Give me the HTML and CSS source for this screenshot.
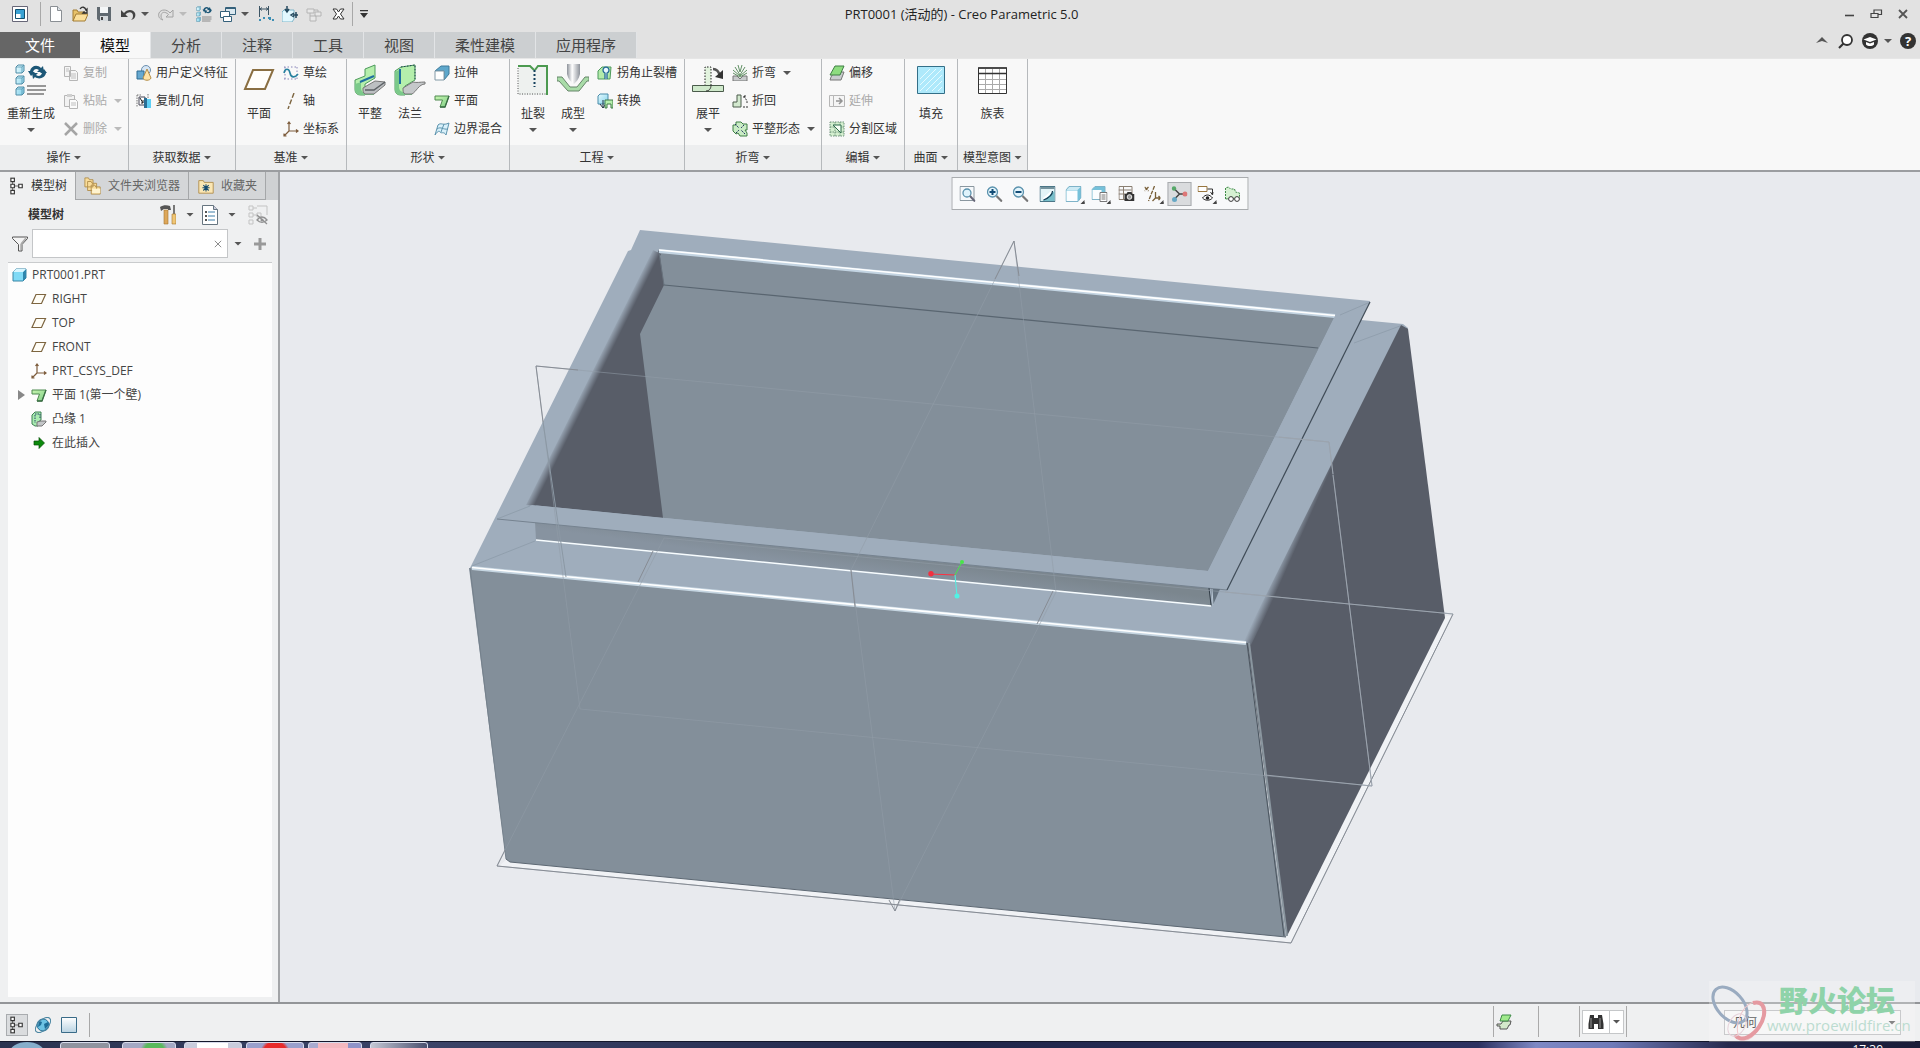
FILE: index.html
```html
<!DOCTYPE html>
<html lang="zh-CN">
<head>
<meta charset="utf-8">
<title>PRT0001 (活动的) - Creo Parametric 5.0</title>
<link rel="stylesheet" href="styles.css">
</head>
<body>
<svg class="defs" aria-hidden="true">
  <defs>
    <linearGradient id="gBlue" x1="0" y1="0" x2="1" y2="1"><stop offset="0" stop-color="#e8fbff"/><stop offset="1" stop-color="#7fd0ea"/></linearGradient>
    <linearGradient id="gGlass" x1="0" y1="0" x2="0" y2="1"><stop offset="0" stop-color="#fff"/><stop offset="1" stop-color="#b9d3e2"/></linearGradient>
    <linearGradient id="gGreen" x1="0" y1="0" x2="1" y2="1"><stop offset="0" stop-color="#c8f5b0"/><stop offset="1" stop-color="#7fcf86"/></linearGradient>
    <linearGradient id="gMetal" x1="0" y1="0" x2="1" y2="0"><stop offset="0" stop-color="#8d929a"/><stop offset=".4" stop-color="#fff"/><stop offset="1" stop-color="#8d929a"/></linearGradient>
  </defs>
  <symbol id="i-plane" viewBox="0 0 16 16"><path d="M5 3.500h9.500l-4 9H1z" fill="#fffdf6" stroke="#7d6540" stroke-width="1.200"/></symbol>
  <symbol id="i-csys" viewBox="0 0 16 16"><path d="M6 1v9h9M6 10l-5 5M4.500 3L6 1l1.500 2M13 8.500l2 1.500-2 1.500M1 12.500V15h2.500" fill="none" stroke="#7d5c3c" stroke-width="1.200"/></symbol>
  <symbol id="i-flat" viewBox="0 0 16 16"><path d="M1 3h14l-4 11H6l2.500-7H1z" fill="url(#gGreen)" stroke="#4f8a50"/><path d="M15 3l-4 11H6" fill="none" stroke="#3b6d45" stroke-width="1.300"/></symbol>
  <symbol id="i-tree" viewBox="0 0 16 20"><path d="M3 3v14M3 10h8" stroke="#555" fill="none"/><g fill="#fff" stroke="#333" stroke-width="1.300"><path d="M1 1h4v4H1zM1 8h4v4H1zM1 15h4v4H1zM10 8h4v4h-4z"/></g></symbol>
  <symbol id="i-regen" viewBox="0 0 32 32"><g fill="url(#gBlue)" stroke="#4f8ca6"><path d="M1 3l2-2h6v6L7 9H1zM1 14l2-2h6v6l-2 2H1zM1 25l2-2h6v6l-2 2H1z"/></g><path d="M1 3h6v6M7 3l2-2M1 14h6v6M7 14l2-2M1 25h6v6M7 25l2-2" fill="none" stroke="#4f8ca6" stroke-width=".7"/><path d="M15 7c1-5 7-7 11-3l2-2 1 6h-7l2-2c-3-2-5-1-6 2h2l-4 4-3-5z" fill="#1d5777"/><path d="M31 9c-1 5-7 7-11 4l-2 2-1-6h6l-2 2c3 2 5 1 6-2h-2l4-4 3 4z" fill="#1d5777"/><path d="M12 22h19M12 26h19M12 30h17" stroke="#777" stroke-width="1.600"/></symbol>
</svg>

<header class="titlebar">
  <nav class="quick" aria-label="快速访问">
    <button class="q" aria-label="应用"><svg viewBox="0 0 16 16"><path d="M.5 .5h15v15H.5z" fill="#fff" stroke="#667"/><path d="M3.500 3.500h9v9h-9z" fill="#3aa2d4" stroke="#12506e"/><path d="M4 8h4.500v4H4z" fill="#fff"/></svg></button>
    <i class="vbar"></i>
    <button class="q" aria-label="新建"><svg viewBox="0 0 16 16"><path d="M2.500 .5h7l4 4v11h-11z" fill="#fff" stroke="#8a8f94"/><path d="M9.500 .5v4h4" fill="#dde3e8" stroke="#8a8f94"/></svg></button>
    <button class="q" aria-label="打开"><svg viewBox="0 0 16 16"><path d="M1 15V4h4l1 2h7v3" fill="#e8c26a" stroke="#a27c35"/><path d="M1 15l3-7h12l-3 7z" fill="#fbdf9b" stroke="#a27c35"/><path d="M8 3c2-3 5-2 6 1l1-1v4h-4l1.500-1.500" fill="none" stroke="#333" stroke-width="1.300"/></svg></button>
    <button class="q" aria-label="保存"><svg viewBox="0 0 16 16"><path d="M1 1h14v14H3l-2-2z" fill="#606970"/><path d="M4 1h8v6H4z" fill="#f4f6f7"/><path d="M4 10h8v5H4z" fill="#d5d9dc"/><path d="M5 11h2v3H5z" fill="#444"/></svg></button>
    <button class="q" aria-label="撤消"><svg viewBox="0 0 16 16"><path d="M1 4v7h7L5.500 8.500C9 5 13 6 13 10c0 2-1 3-2 4 4-1 5-4 4-7-2-4-8-4-11 0z" fill="#444"/></svg></button>
    <i class="arr narrow"></i>
    <button class="q" aria-label="重做" disabled><svg viewBox="0 0 16 16"><path d="M15 4v7H8l2.500-2.500C7 5 3 6 3 10c0 2 1 3 2 4-4-1-5-4-4-7 2-4 8-4 11 0z" fill="#ddd" stroke="#666"/></svg></button>
    <i class="arr narrow dim"></i>
    <button class="q" aria-label="重新生成"><svg viewBox="0 0 32 32"><use href="#i-regen"/></svg></button>
    <button class="q" aria-label="窗口"><svg viewBox="0 0 16 16"><path d="M5.500 1.500h10v7h-10z" fill="#dbe8ef" stroke="#35617b"/><path d="M.5 5.500h9v6h-9z" fill="#fff" stroke="#35617b"/><path d="M3.500 10.500h8v5h-8z" fill="#fff" stroke="#35617b"/><path d="M5 2.500h10" stroke="#35617b"/></svg></button>
    <i class="arr narrow"></i>
    <button class="q" aria-label="尺寸"><svg viewBox="0 0 16 16"><path d="M1.500 0v11M10.500 0v9M2 3h8M4 1.500L2 3l2 1.500M8 1.500L10 3 8 4.500" fill="none" stroke="#3d5565"/><path d="M1 14h2M5 12h2M10 12h2v2M14 14h2" fill="none" stroke="#3e8fb4" stroke-width="2"/></svg></button>
    <button class="q" aria-label="参考"><svg viewBox="0 0 16 16"><path d="M0 6l2-2h10v9l-2 3H0z" fill="#e2f8fe" stroke="#7fb4c8"/><path d="M5 0v5M3 3l2 3 2-3M14 6v6M11 9h5M12 7l-3 2 3 2" fill="none" stroke="#24485d" stroke-width="1.500"/></svg></button>
    <button class="q" aria-label="族" disabled><svg viewBox="0 0 16 16"><path d="M1 3h7v4H1zM9 6h6v4H9zM4 10h6v5H4z" fill="#eee" stroke="#888"/><path d="M4 7v3M8 4h4v2" fill="none" stroke="#888"/></svg></button>
    <button class="q" aria-label="关闭"><svg viewBox="0 0 16 16"><path d="M3 3h3.500L8.500 6l2-3H14l-3.500 5 3.500 5h-3.500l-2-3-2 3H3l3.500-5z" fill="#fff" stroke="#333"/></svg></button>
    <i class="vbar last"></i>
    <button class="q more" aria-label="自定义"><i class="arr over"></i></button>
  </nav>
  <h1>PRT0001 (活动的) - Creo Parametric 5.0</h1>
  <div class="winctl">
    <button class="q" aria-label="最小化"><svg viewBox="0 0 16 16"><path d="M4 9.500h9" stroke="#444" stroke-width="1.600"/></svg></button>
    <button class="q" aria-label="还原"><svg viewBox="0 0 16 16"><path d="M3 7.500h7v4H3zM6 7V4h7.500v4.500H10" fill="none" stroke="#444" stroke-width="1.200"/></svg></button>
    <button class="q" aria-label="关闭"><svg viewBox="0 0 16 16"><path d="M4 4l8 8M12 4l-8 8" stroke="#555" stroke-width="1.800"/></svg></button>
  </div>
</header>

<div class="tabrow">
  <nav class="tabs">
    <button class="file">文件</button><button class="on">模型</button><button>分析</button><button>注释</button><button>工具</button><button>视图</button><button>柔性建模</button><button>应用程序</button>
  </nav>
  <div class="helpers">
    <button class="q" aria-label="折叠"><svg viewBox="0 0 16 16"><path d="M2 10l6-6 6 6-6-2z" fill="#555"/></svg></button>
    <button class="q" aria-label="搜索"><svg viewBox="0 0 16 16"><circle cx="9" cy="7" r="5" fill="#fff" stroke="#333" stroke-width="1.800"/><path d="M5.500 10.500L1 15" stroke="#333" stroke-width="2.200"/></svg></button>
    <button class="q" aria-label="学习"><svg viewBox="0 0 16 16"><circle cx="8" cy="8" r="8" fill="#333"/><path d="M1.500 6.500L8 4l6.500 2.500L8 9zM4 9v2.500c2 2 6 2 8 0V9L8 10.500z" fill="#fff"/></svg></button>
    <i class="arr"></i>
    <button class="q helpbtn" aria-label="帮助">?</button>
  </div>
</div>

<section class="ribbon" aria-label="功能区">
  <div class="group g-op">
    <div class="body">
      <button class="big"><svg viewBox="0 0 32 32"><use href="#i-regen"/></svg><span>重新生成</span><i class="arr"></i></button>
      <div class="col">
        <button class="sm" disabled><svg viewBox="0 0 16 16"><path d="M1.500 1.500h6v10h-6zM6.500 5.500h6l2 2v8h-8z" fill="#f4f4f4" stroke="#777"/><path d="M3 4h3M3 6h3M8 9h5M8 11h5M8 13h5" stroke="#888"/></svg>复制</button>
        <button class="sm" disabled><svg viewBox="0 0 16 16"><path d="M1.500 2.500h10v11h-10z" fill="#eee" stroke="#777"/><path d="M4 1h5v3H4z" fill="#aaa"/><path d="M6.500 6.500h6l2 2v7h-8z" fill="#fff" stroke="#777"/><path d="M8 10h5M8 12h5" stroke="#888"/></svg>粘贴<i class="arr"></i></button>
        <button class="sm" disabled><svg viewBox="0 0 16 16"><path d="M2 2l12 12M14 2L2 14" stroke="#555" stroke-width="2.500"/></svg>删除<i class="arr"></i></button>
      </div>
    </div>
    <button class="cap">操作<i class="arr"></i></button>
  </div>
  <div class="group g-get">
    <div class="body">
      <div class="col">
        <button class="sm"><svg viewBox="0 0 16 16"><circle cx="10" cy="5" r="4.500" fill="#d6e6f5" stroke="#6c8fae"/><path d="M1 6h7v8H1z" fill="#67a9d0" stroke="#2f6d93"/><path d="M11 4l4 9c-1 3-7 3-8 0z" fill="#ffe3a6" stroke="#b38d46"/></svg>用户定义特征</button>
        <button class="sm"><svg viewBox="0 0 16 16"><path d="M1 2h4M1 2v12M12 1v4" stroke="#777" stroke-dasharray="1.500 1"/><path d="M3 4h6v8H3z" fill="#fff" stroke="#445"/><path d="M4 5l3 5M7 7v3H5" stroke="#222" fill="none"/><path d="M10 6h5v9h-5z" fill="#5fd0f5"/><path d="M8 5h3v10H8z" fill="#2b6f95"/></svg>复制几何</button>
      </div>
    </div>
    <button class="cap">获取数据<i class="arr"></i></button>
  </div>
  <div class="group g-datum">
    <div class="body">
      <button class="big"><svg viewBox="0 0 32 32"><path d="M10 6h20l-8 19H2z" fill="#fffefb" stroke="#8a6f42" stroke-width="2"/></svg><span>平面</span></button>
      <div class="col">
        <button class="sm"><svg viewBox="0 0 16 16"><path d="M1 2h14M1 14h14M2 2v12M14 2v12" stroke="#8884b8" stroke-dasharray="1.500 2"/><path d="M1 8c1-5 5-5 6 0s5 5 8 1" fill="none" stroke="#27809f" stroke-width="1.600"/></svg>草绘</button>
        <button class="sm"><svg viewBox="0 0 16 16"><path d="M11 0L5 16" stroke="#7d6540" stroke-width="1.400" stroke-dasharray="5 2"/></svg>轴</button>
        <button class="sm"><svg viewBox="0 0 16 16"><use href="#i-csys"/></svg>坐标系</button>
      </div>
    </div>
    <button class="cap">基准<i class="arr"></i></button>
  </div>
  <div class="group g-shape">
    <div class="body">
      <button class="big"><svg viewBox="0 0 32 32"><path d="M1 16l10-4V5l10-4v13l-10 6v11H7c-4 0-6-2-6-6z" fill="#b5efac" stroke="#4d9a5c"/><path d="M1 20l6-2v6c0 3 2 5 5 5h8v2H8c-4 0-7-2-7-6z" fill="#7bc98a"/><path d="M9 24l12-7 10 1v3l-11 9h-9c-2-1-2-3-2-6z" fill="#bcbfc2" stroke="#777"/><path d="M6 18l14-6" stroke="#1e6fa0" stroke-width="2"/><path d="M11 26h9l11-8" fill="none" stroke="#5c6165" stroke-width="1.500"/></svg><span>平整</span></button>
      <button class="big"><svg viewBox="0 0 32 32"><path d="M1 7l6-4 14-2v15l-10 6v9H7c-4 0-6-2-6-6z" fill="#b5efac" stroke="#4d9a5c"/><path d="M1 8l4-2v17c0 3 2 5 5 5h8v3H8c-4 0-7-2-7-6z" fill="#7bc98a"/><path d="M9 24l10-6c4 1 7 0 12 0v2c-6 0-9 8-13 10h-7c-2-1-2-3-2-6z" fill="#c5c8ca" stroke="#777"/><path d="M6 5v15" stroke="#1e6fa0" stroke-width="2"/><path d="M7 3l14-2v14" fill="none" stroke="#245" stroke-dasharray="1.500 1.500"/></svg><span>法兰</span></button>
      <div class="col">
        <button class="sm"><svg viewBox="0 0 16 16"><path d="M1 6l6-5h8v8l-5 6V6z" fill="#5ea7cb" stroke="#3f7b9b"/><path d="M1 6h9v9H1z" fill="#fff" stroke="#8299a6"/></svg>拉伸</button>
        <button class="sm"><svg viewBox="0 0 16 16"><use href="#i-flat"/></svg>平面</button>
        <button class="sm"><svg viewBox="0 0 16 16"><path d="M4 4c3-3 5 1 11-2l-3 12c-2-4-5-1-6-3s-3 0-5 3z" fill="#d9f1fb" stroke="#5c93ad"/><path d="M10 3L7 11M3 8c4-3 6 1 11 0" fill="none" stroke="#5c93ad"/></svg>边界混合</button>
      </div>
    </div>
    <button class="cap">形状<i class="arr"></i></button>
  </div>
  <div class="group g-eng">
    <div class="body">
      <button class="big"><svg viewBox="0 0 32 32"><path d="M1 3h29v28H1z" fill="#eef1ef"/><path d="M1 4v26h28" fill="none" stroke="#555" stroke-dasharray="1 1.500"/><path d="M1 2h12l4 4M30 31V2H21l-3 4" fill="none" stroke="#4c9a50" stroke-width="2"/><path d="M17.500 6v17" stroke="#15415c" stroke-width="2" stroke-dasharray="2 2"/></svg><span>扯裂</span><i class="arr"></i></button>
      <button class="big"><svg viewBox="0 0 32 32"><path d="M10 0h13v10c-1 5-4 8-6 10-3-2-6-5-7-10z" fill="url(#gMetal)"/><path d="M0 13h5l8 10h7l8-10h4v4h-2l-8 10H11L2 17H0z" fill="#a9dca8" stroke="#67866a"/></svg><span>成型</span><i class="arr"></i></button>
      <div class="col">
        <button class="sm"><svg viewBox="0 0 16 16"><path d="M1 14V6l4-4h9l-1 12z" fill="#b3ebaa" stroke="#4d9a5c"/><path d="M8 14V8a3 3 0 1 1 2 0v6" fill="#e8f7ff" stroke="#236996" stroke-width="1.300"/></svg>拐角止裂槽</button>
        <button class="sm"><svg viewBox="0 0 16 16"><path d="M1 3l2-2h8v7l-3 3H1z" fill="url(#gBlue)" stroke="#4b8caa"/><path d="M6 7v8M3 11l3 4 2-3" stroke="#234" fill="none"/><path d="M8 15V7h8v8h-2v-4h-4v4z" fill="#b5efac" stroke="#407a48"/></svg>转换</button>
      </div>
    </div>
    <button class="cap">工程<i class="arr"></i></button>
  </div>
  <div class="group g-bend">
    <div class="body">
      <button class="big"><svg viewBox="0 0 32 32"><path d="M13 22V3h6v19" fill="#e2f3de" stroke="#222" stroke-dasharray="1.500 1.500"/><path d="M.5 21.500h31v6H.5z" fill="#cfe9cb" stroke="#4a5b4b"/><path d="M19 21c0 4-2 6-5 6" fill="none" stroke="#333"/><path d="M21 5c4 0 6 3 7 7" fill="none" stroke="#555" stroke-width="2.500"/><path d="M23 13l8 2V6z" fill="#333"/></svg><span>展平</span><i class="arr"></i></button>
      <div class="col">
        <button class="sm"><svg viewBox="0 0 16 16"><path d="M1 11h4l3 3 3-3h4v5H1z" fill="#c8cbcc" stroke="#777"/><path d="M1 8l7 4 7-4M1 5l7 6 7-6M3 2l5 8 5-8M6 0l2 7 2-7" fill="none" stroke="#5f8f62"/></svg>折弯<i class="arr"></i></button>
        <button class="sm"><svg viewBox="0 0 16 16"><path d="M1 14V9h4V2h4v12z" fill="#d3e9cf" stroke="#4c5d4d"/><path d="M11 14h5M12 3v3M12 3h3M12 3l3 5v2" fill="none" stroke="#333" stroke-dasharray="2 1"/></svg>折回</button>
        <button class="sm"><svg viewBox="0 0 16 16"><path d="M1 4h3V1h5l2 2h4v6h-2l2 3v3H8l-2-3-2 1-3-3z" fill="#c9ecc4" stroke="#3f7e45"/><path d="M3 3l4 4M13 13L9 9M12 4L9 7M4 12l3-3" stroke="#236" stroke-dasharray="2 1"/></svg>平整形态<i class="arr"></i></button>
      </div>
    </div>
    <button class="cap">折弯<i class="arr"></i></button>
  </div>
  <div class="group g-edit">
    <div class="body">
      <div class="col">
        <button class="sm"><svg viewBox="0 0 16 16"><path d="M1 15l1-3 3-5h10l-3 8z" fill="#c9ccce" stroke="#777"/><path d="M1 10l5-9h9l-4 9z" fill="#8ddc7f" stroke="#3f7e45"/></svg>偏移</button>
        <button class="sm" disabled><svg viewBox="0 0 16 16"><path d="M.5 2.500h4v11h-4zM4.500 2.500h11v11h-11z" fill="#f3f3f3" stroke="#777"/><path d="M7 8h5M10 5l3 3-3 3" fill="none" stroke="#333" stroke-width="1.500"/></svg>延伸</button>
        <button class="sm"><svg viewBox="0 0 16 16"><path d="M1 1h14v14H1z" fill="#d4efcf"/><path d="M1 1h14v14H1zM1 6h14M1 11h14M6 1v14M11 1v14" fill="none" stroke="#6e937b" stroke-dasharray="1.500 1"/><path d="M4 4l8 8V4z" fill="#f7fff5" stroke="#2b6a4a"/></svg>分割区域</button>
      </div>
    </div>
    <button class="cap">编辑<i class="arr"></i></button>
  </div>
  <div class="group g-surf">
    <div class="body center">
      <button class="big"><svg viewBox="0 0 32 32"><path d="M2.500 2.500h27v27h-27z" fill="#aee9fb" stroke="#336f88"/><path d="M5 15L15 5M5 21L21 5M5 27L27 5M11 27L27 11M17 27l10-10M23 27l4-4" stroke="#e6fbff"/></svg><span>填充</span></button>
    </div>
    <button class="cap">曲面<i class="arr"></i></button>
  </div>
  <div class="group g-intent">
    <div class="body center">
      <button class="big"><svg viewBox="0 0 32 32"><path d="M1.500 4h28v25.500h-28z" fill="#fff" stroke="#333"/><path d="M2 15.500h27M2 20.500h27M2 25.500h27M8.500 5v24M15.500 5v24M22.500 5v24" stroke="#aaa"/><path d="M1 4h29M2 9.500h27" stroke="#333" stroke-width="1.500"/></svg><span>族表</span></button>
    </div>
    <button class="cap">模型意图<i class="arr"></i></button>
  </div>
</section>

<main class="work">
  <aside class="panel">
    <div class="ptabs">
      <button class="on"><svg class="t" viewBox="0 0 16 20"><use href="#i-tree"/></svg>模型树</button>
      <button><svg class="f" viewBox="0 0 20 20"><g fill="#f9dd9b" stroke="#b08d4c"><path d="M1 3V1h4l1 2h4v8H1zM4 8V5h4l1 2h5v8H4zM8 12V9h4l1 2h5v8H8z"/></g><path d="M9 13h9v5H9z" fill="#fff3cf"/></svg>文件夹浏览器</button>
      <button><svg class="f" viewBox="0 0 20 20"><path d="M2 18V4h5l1 2h10v12z" fill="#fbe7b4" stroke="#b08d4c"/><path d="M10 8v8M6 12h8M7 9l6 6M13 9l-6 6" stroke="#164c70" stroke-width="1.200"/></svg>收藏夹</button>
    </div>
    <div class="phead">
      <h2>模型树</h2>
      <button class="q" aria-label="设置"><svg viewBox="0 0 16 20"><path d="M0 2c3-2 7-2 10-1l1 4H8V4H4L1 6z" fill="#555"/><path d="M4 5h4v14H4z" fill="#dda75a" stroke="#a5752f" stroke-width=".6"/><path d="M13 0h2v9h-2z" fill="#777"/><path d="M12 9h4v10h-4z" fill="#f0c675" stroke="#a5752f" stroke-width=".6"/></svg></button>
      <i class="arr"></i>
      <button class="q" aria-label="显示"><svg viewBox="0 0 16 20"><path d="M.5 .5h11l4 4v15H.5z" fill="#fff" stroke="#667580"/><path d="M11.500 .5v4h4" fill="#ccd" stroke="#667580"/><path d="M3 7h2M3 11h2M3 15h2" stroke="#555" stroke-width="2"/><path d="M6 7h7M6 11h7M6 15h7" stroke="#3e7fa8"/></svg></button>
      <i class="arr"></i>
      <button class="q dimmed wide" aria-label="隐藏"><svg viewBox="0 0 20 20"><path d="M1 1h4v4H1zM1 8h4v4H1zM1 15h4v4H1zM9 8h4v4H9zM9 1h10v9M5 3h4M5 10h4" fill="none" stroke="#999"/><path d="M9 15c3-4 7-4 10 0-3 3-7 3-10 0zM9 10l10 9" fill="none" stroke="#333" stroke-width="1.300"/><circle cx="14" cy="15" r="1.500" fill="#333"/></svg></button>
    </div>
    <div class="pfilter">
      <svg class="funnel" viewBox="0 0 16 16"><path d="M.5 1h15v1.500L10 8.500V15H6.500V8.500L.5 2.500z" fill="#f4f4f4" stroke="#555"/><path d="M9 8l5-6M9 8v6" stroke="#aaa" stroke-width="1.500"/></svg>
      <div class="fbox"><input type="text" aria-label="过滤"><button aria-label="清除"><svg viewBox="0 0 10 10"><path d="M1 1l8 8M9 1L1 9" stroke="#888" stroke-width="1.200"/></svg></button></div>
      <i class="arr"></i>
      <button class="plus" aria-label="添加"><svg viewBox="0 0 12 12"><path d="M6 0v12M0 6h12" stroke="#999" stroke-width="3"/></svg></button>
    </div>
    <ul class="tree">
      <li class="root"><svg viewBox="0 0 16 16"><path d="M2 5l3-3h10v9l-3 3H2z" fill="#7fdaf6" stroke="#3a86a6"/><path d="M12 5l3-3v9l-3 3z" fill="#2e86ad"/><path d="M2 5l3-3h10l-3 3z" fill="#d9f6ff"/></svg>PRT0001.PRT</li>
      <li><svg viewBox="0 0 16 16"><use href="#i-plane"/></svg>RIGHT</li>
      <li><svg viewBox="0 0 16 16"><use href="#i-plane"/></svg>TOP</li>
      <li><svg viewBox="0 0 16 16"><use href="#i-plane"/></svg>FRONT</li>
      <li><svg viewBox="0 0 16 16"><use href="#i-csys"/></svg>PRT_CSYS_DEF</li>
      <li class="node"><i class="twist"></i><svg viewBox="0 0 16 16"><use href="#i-flat"/></svg>平面 1(第一个壁)</li>
      <li><svg viewBox="0 0 16 16"><path d="M1 4l3-3h6v8l-3 2v4H4l-3-2z" fill="#a9ecb0" stroke="#3f7e55"/><path d="M6 11l4-1h5v1l-4 4H6z" fill="#c3c6c8" stroke="#777"/><path d="M4 4v8M4 3h5v5" fill="none" stroke="#246" stroke-dasharray="1.500 1"/></svg>凸缘 1</li>
      <li><svg viewBox="0 0 16 16"><path d="M3 6h5V2.500L13.500 8 8 13.500V10H3z" fill="#0c8a0c" stroke="#064b06" stroke-width=".7"/></svg>在此插入</li>
    </ul>
  </aside>

  <section class="view" aria-label="图形窗口">
    <svg class="model" viewBox="280 172 1640 830">
      <defs>
        <linearGradient id="edgeR" gradientUnits="userSpaceOnUse" x1="1315" y1="481" x2="1324" y2="485"><stop offset="0" stop-color="#9fadbc"/><stop offset="1" stop-color="#585d68"/></linearGradient>
        <linearGradient id="edgeL" gradientUnits="userSpaceOnUse" x1="589" y1="376" x2="597" y2="380"><stop offset="0" stop-color="#9fadbc"/><stop offset="1" stop-color="#585d68"/></linearGradient>
        <linearGradient id="wall" gradientUnits="userSpaceOnUse" x1="900" y1="555" x2="897" y2="577"><stop offset="0" stop-color="#7b868e"/><stop offset="1" stop-color="#8793a0"/></linearGradient>
      </defs>
      <path d="M499 866L1291 943 1453 615 1444 617 1287 935 506 860z" fill="#f0f2f5"/>
      <path d="M640 230L1370 301 1361 320 1403 324 1408 328 1247 643 470 568 628 251 631 250z" fill="#9fadbc"/>
      <path d="M469 568L1247 643 1286 937 510 862 506 859z" fill="#838f9a"/>
      <path d="M1247 643L1403 327 1408 329 1445 618 1287 936z" fill="#585d68"/>
      <path d="M1243 641L1401 325 1408 329 1251 645z" fill="url(#edgeR)"/>
      <path d="M659 250L1335 316 1208 571 532 505z" fill="#838f9a"/>
      <path d="M659 250L664 285 640 334 663 518 532 505z" fill="#585d68"/>
      <path d="M653 250L661 254 536 506 526 505z" fill="url(#edgeL)"/>
      <path d="M659 252L664 285" stroke="#69737e"/>
      <path d="M664 285L1318 348" stroke="#596570" stroke-width="1.200"/>
      <path d="M659 251L1335 316" stroke="#c3d4e2" stroke-width="4"/>
      <path d="M659 250L1335 315.500" stroke="#fff" stroke-width="1.600"/>
      <path d="M535 522L1209 588 1212 606 536 540z" fill="url(#wall)"/>
      <path d="M532 505L1208 571 1335 316 1370 301 1227 590 497 519z" fill="#9fadbc"/>
      <path d="M497 519L1227 590" stroke="#768390"/>
      <path d="M1227 590L1370 302" stroke="#3f4b56" stroke-width="1.200"/>
      <path d="M1211 589h9l-7 16z" fill="#64717e"/><path d="M1209 588l2 17" stroke="#303b45"/><path d="M1212 589l1 16" stroke="#b9c7d4"/>
      <path d="M536 540L1211 606" stroke="#f8fdff" stroke-width="1.500"/>
      <path d="M472 568L1246 643" stroke="#c5d5e1" stroke-width="4"/>
      <path d="M472 567.500L1246 642.500" stroke="#fff" stroke-width="1.600"/>
      <path d="M472 566L535 541M497 519l33-13M1340 315l28-12M1354 343l46-17" stroke="#8795a3" stroke-width=".6"/>
      <path d="M470 568L506 859" fill="none" stroke="#75818c"/>
      <path d="M506 859l4 3L1286 937" fill="none" stroke="#5d6873"/>
      <path d="M1249 643L1287 936" stroke="#8a969f" stroke-width="2"/><path d="M1247 643L1284 936" stroke="#4b555f"/>
      <g fill="none" stroke-width="1">
        <path d="M1014 241L851 570 895 911 1056 592zM536 366L1329 442 1372 786 580 709zM497 866L664 538 1453 614 1291 943z" stroke="#929ca7" stroke-opacity=".55"/>
        <path d="M536 366l42 4M536 366l7 56M1014 241l-19 38M1014 241l5 35M497 866L1291 943 1453 614M497 866l8-16M895 911l-6-11M895 911l5-12M851 570l4 37M1053 591l-16 33M653 551l-15 31" stroke="#878c94"/>
        <path d="M543 422l23 155" stroke="#8b98a4"/>
        <path d="M1225 592L1453 614M1333 475L1372 786 1265 775M1329 442l-50-5M1329 442l4 32" stroke="#9ca4ae"/>
        <path d="M931 574L955 575" stroke="#ff3040"/><path d="M955 575L962 562" stroke="#48e648"/><path d="M955 575L957 596" stroke="#50f2e4"/>
      </g>
      <circle cx="931" cy="573.700" r="2.700" fill="#f23040"/><circle cx="962" cy="562" r="2" fill="#48e648"/><circle cx="957" cy="596" r="2.500" fill="#50f2e4"/>
    </svg>
    <div class="vtools" role="toolbar">
      <button aria-label="重新调整"><svg viewBox="0 0 16 16"><path d="M.5 .5h14v14H.5z" fill="#f6f9fb" stroke="#8a979f"/><circle cx="7.500" cy="7" r="4" fill="#dff3fb" stroke="#5a92ad" stroke-width="1.300"/><path d="M10.500 10l5 5.500" stroke="#667" stroke-width="2"/></svg></button>
      <button aria-label="放大"><svg viewBox="0 0 16 16"><circle cx="6" cy="6" r="5" fill="#e4f5fc" stroke="#5a92ad" stroke-width="1.300"/><path d="M3 6h6M6 3v6" stroke="#134d77" stroke-width="2"/><path d="M10 10l5.500 5.500" stroke="#777" stroke-width="2.200"/></svg></button>
      <button aria-label="缩小"><svg viewBox="0 0 16 16"><circle cx="6" cy="6" r="5" fill="#e4f5fc" stroke="#5a92ad" stroke-width="1.300"/><path d="M3 6h6" stroke="#134d77" stroke-width="2"/><path d="M10 10l5.500 5.500" stroke="#777" stroke-width="2.200"/></svg></button>
      <button aria-label="重画"><svg viewBox="0 0 16 16"><path d="M.5 .5h15v15H.5z" fill="#e3f4f7" stroke="#4b7687"/><path d="M1 1h14v2H1z" fill="#75939e"/><path d="M15 5v10H3z" fill="#79bfca"/><path d="M13 5L4 13" stroke="#fff" stroke-width="2"/><path d="M13 5c0 4-4 7-9 9" fill="none" stroke="#153f55" stroke-width="1.300"/></svg></button>
      <button class="dd" aria-label="显示样式"><svg viewBox="0 0 16 16"><path d="M.5 4l3-3.500h12v11l-3 4H.5z" fill="#75c1da" stroke="#7fb3c8"/><path d="M1 4.500h11V15H1z" fill="#fafdff"/><path d="M1 4l3-3h11l-3 3z" fill="#cdeaf4"/></svg></button>
      <button class="dd" aria-label="已保存方向"><svg viewBox="0 0 16 16"><path d="M.5 3.500l3-3h10v8l-3 5H.5z" fill="#75c1da" stroke="#7fb3c8"/><path d="M1 4h9v9H1z" fill="#fafdff"/><path d="M8.500 6.500h7v9h-7z" fill="#fff" stroke="#777"/><path d="M10 9h4M10 11h4M10 13h4" stroke="#777"/></svg></button>
      <button aria-label="视图管理器"><svg viewBox="0 0 16 16"><path d="M.5 .5h13v13H.5zM5 0v13M0 4h13M0 8h13" fill="none" stroke="#8a7f72"/><path d="M6 8h2l1-2h4l1 2h2v7H6z" fill="#333"/><circle cx="11" cy="11" r="2.300" fill="#999" stroke="#eee"/></svg></button>
      <button class="dd" aria-label="基准显示"><svg viewBox="0 0 16 16"><path d="M0 1l4 4M4 1L0 5M10 0L4 15" stroke="#785f38" stroke-width="1.300" stroke-dasharray="4 1"/><path d="M11 6v6h5M11 12l-3 3M14 10l2 2-2 2" fill="none" stroke="#785f38" stroke-width="1.300"/></svg></button>
      <button class="pressed" aria-label="旋转中心"><svg viewBox="0 0 16 16"><path d="M3 3l5 5h6M8 8l-5 5" fill="none" stroke="#444" stroke-width="1.500"/><circle cx="2.500" cy="2.500" r="2.200" fill="#56a869"/><circle cx="13.500" cy="8" r="2.500" fill="#dd7777"/><circle cx="3" cy="13.500" r="2.500" fill="#67a8c4"/></svg></button>
      <button class="dd" aria-label="注释显示"><svg viewBox="0 0 16 16"><path d="M.5 .5h9v5h-9z" fill="#fff" stroke="#98763f"/><path d="M10 3h5v5M13 6l2 3 1-3" stroke="#333" fill="none"/><path d="M5 12c3-4 7-4 10 0-3 3-7 3-10 0z" fill="#fff" stroke="#222"/><circle cx="10" cy="12" r="1.800" fill="#222"/></svg></button>
      <button aria-label="预览"><svg viewBox="0 0 16 16"><path d="M1 13V2l3-1 2 2h4l1 3 4 1v5z" fill="#d6f1d2" stroke="#3f8a48" stroke-dasharray="2 1"/><circle cx="6.500" cy="13" r="2.400" fill="#fff" stroke="#333"/><circle cx="12.500" cy="13" r="2.400" fill="#fff" stroke="#333"/></svg></button>
    </div>
  </section>
</main>

<footer class="status">
  <button class="sb pressed" aria-label="模型树"><svg viewBox="0 0 16 20"><use href="#i-tree"/></svg></button>
  <button class="sb" aria-label="浏览器"><svg viewBox="0 0 16 16"><circle cx="8" cy="8" r="6" fill="#6cc3e4" stroke="#276f95"/><path d="M4 4l3 1-1 3-3 2zM9 7l4-2 1 3-4 4z" fill="#1d6d98"/><ellipse cx="8" cy="8" rx="9.500" ry="5" transform="rotate(-45 8 8)" fill="none" stroke="#4b86a2"/></svg></button>
  <button class="sb" aria-label="全屏"><svg viewBox="0 0 16 16"><path d="M.5 .5h15v15H.5z" fill="url(#gGlass)" stroke="#396b88"/></svg></button>
  <i class="vbar"></i>
  <span class="spring"></span>
  <div class="cell c1"><svg viewBox="0 0 16 16"><path d="M1 10h4l2-3h8l-1 4h-1l-2 4H4v-3H1z" fill="#d4e9cb" stroke="#555"/><path d="M4 7l2-6h9l-3 6z" fill="#a0ea8c" stroke="#3f8a48"/></svg></div>
  <div class="cell c2"></div>
  <div class="cell c3">
    <button class="find" aria-label="查找"><svg viewBox="0 0 16 16"><path d="M2 1h4v3h4V1h4l1.500 9v5H10v-5H6v5H.500v-5z" fill="#333"/><path d="M3 4v10M12 4v10" stroke="#999"/></svg></button>
    <button class="drop" aria-label="查找选项"><i class="arr"></i></button>
  </div>
  <label class="combo"><select aria-label="选择过滤器"><option>几何</option></select><i class="arr"></i></label>
</footer>

<div class="taskbar"><i class="orb"></i><i class="task t1"></i><i class="task t2"></i><i class="task t3"></i><i class="task t4"></i><i class="task t5"></i><i class="task t6"></i><span class="clock">17:39</span></div>

<div class="watermark">
  <svg viewBox="0 0 58 58"><g fill="none"><ellipse cx="20" cy="22" rx="21" ry="13" transform="rotate(48 20 22)" stroke="#9aabc0" stroke-width="3"/><ellipse cx="40" cy="38" rx="11" ry="20" transform="rotate(22 40 38)" stroke="#efc4c8" stroke-width="1"/><path d="M43 20c18-5 13 25-5 34-6 3-11 1-13-2" stroke="#e59aa1" stroke-width="4"/><ellipse cx="27" cy="42" rx="8" ry="12" transform="rotate(30 27 42)" stroke="#e6d2da"/></g></svg>
  <div><strong>野火论坛</strong><span>www.proewildfire.cn</span></div>
</div>
</body>
</html>
```
FILE: styles.css
```css
* { box-sizing: border-box; }
body {
  margin: 0;
  height: 100vh;
  min-width: 1200px;
  display: flex;
  flex-direction: column;
  position: relative;
  overflow: hidden;
  background: #e2e2e2;
  color: #333;
  font: 12px/16px "Open Sans", "Noto Sans CJK SC", sans-serif;
}
button, input, select { font: inherit; color: inherit; border: 0; margin: 0; padding: 0; background: none; }
button { display: flex; align-items: center; justify-content: center; white-space: nowrap; }
h1, h2, ul { margin: 0; padding: 0; font-weight: normal; }
.defs { position: absolute; width: 0; height: 0; }
svg { display: block; flex: none; width: 16px; height: 16px; }
button:disabled { color: #aaa; }
button:disabled svg, .dimmed svg { opacity: .5; }

.arr { flex: none; width: 8px; height: 4px; background: #555; clip-path: polygon(0 0, 100% 0, 50% 100%); }
button:disabled .arr, .arr.dim { background: #bbb; }
.vbar { flex: none; width: 1px; height: 24px; background: #a8a8a8; }
.q { flex: none; width: 16px; height: 20px; }

/* title bar */
.titlebar { display: grid; grid-template-columns: 1fr auto 1fr; height: 32px; padding: 0 9px 4px 12px; align-items: center; }
.quick { display: flex; align-items: center; gap: 8px; }
.quick .vbar { margin: 0 -1px 0 4px; }
.quick .vbar.last { margin: 0 -5px 0 -2px; }
.quick .narrow { margin: 0 1px 0 -3px; }
.quick .more .arr { width: 10px; height: 8px; clip-path: polygon(10% 0, 90% 0, 90% 15%, 10% 15%, 10% 37%, 90% 37%, 50% 100%, 10% 37%); background: #333; }
.titlebar h1 { font-size: 13px; line-height: 20px; color: #222; }
.winctl { display: flex; justify-content: flex-end; gap: 11px; }

/* tabs */
.tabrow { display: flex; justify-content: space-between; height: 26px; padding-right: 4px; }
.tabs { display: flex; }
.tabs button { height: 26px; padding: 0 20px; border-right: 1px solid #e2e4e6; background: #cccfd1; font-size: 15px; color: #444; }
.tabs .file { width: 80px; background: #666; color: #fff; border: 0; }
.tabs .on { background: #f8f8f8; color: #111; }
.helpers { display: flex; align-items: center; gap: 8px; padding-bottom: 8px; height: 26px; }
.helpers .arr { margin: 0 0 0 -2px; }
.helpbtn { height: 16px; border-radius: 8px; background: #333; color: #fff; font-weight: bold; font-size: 13px; }

/* ribbon */
.ribbon { display: flex; height: 112px; background: #f8f8f8; border-top: 1px solid #e6e6e6; flex: none; }
.group { display: flex; flex-direction: column; border-right: 1px solid #b6b9bc; flex: none; }
.g-op { width: 129px; } .g-get { width: 107px; } .g-datum { width: 111px; } .g-shape { width: 163px; } .g-eng { width: 175px; }
.g-bend { width: 137px; } .g-edit { width: 83px; } .g-surf { width: 53px; } .g-intent { width: 70px; }
.body { display: flex; height: 86px; padding-left: 3px; }
.body.center { padding: 0; justify-content: center; }
.big { flex-direction: column; justify-content: flex-start; width: 40px; padding-top: 5px; }
.g-op .big { width: 56px; }
.big svg { width: 32px; height: 32px; margin-bottom: 10px; }
.big .arr { margin-top: 6px; }
.col { display: flex; flex-direction: column; margin-left: 4px; }
.sm { height: 28px; gap: 4px; justify-content: flex-start; }
.sm .arr { margin-left: 3px; }
.cap { height: 25px; gap: 3px; background: #edeeef; }

/* work area */
.work { display: flex; flex: 1; min-height: 0; border-top: 2px solid #9b9da0; border-bottom: 2px solid #939598; }
.panel { display: flex; flex-direction: column; width: 280px; flex: none; padding: 0 6px 5px 8px; background: #eff0f1; border-right: 2px solid #a2a4a7; }
.ptabs { display: flex; height: 28px; margin: 0 -6px 0 -8px; background: #cfd1d3; }
.ptabs button { gap: 6px; border-right: 1px solid #a5a7a9; border-bottom: 1px solid #a5a7a9; background: #d4d6d8; padding: 0 8px; color: #666; }
.ptabs .on { background: #eff0f1; border-bottom: 0; color: #333; padding: 0 8px 0 10px; gap: 7px; }
.ptabs .t { width: 14px; height: 18px; }
.ptabs .f { width: 18px; height: 18px; }
.phead { display: flex; align-items: center; height: 29px; padding-left: 20px; }
.phead h2 { font-weight: bold; width: 132px; font-size: 12px; }
.phead .q svg { height: 20px; }
.phead .arr { margin: 0 8px 0 10px; }
.phead .wide, .phead .wide svg { width: 20px; }
.phead .wide { margin-left: 4px; }
.pfilter { display: flex; align-items: center; height: 29px; padding: 0 6px 0 4px; }
.fbox { display: flex; flex: 1; height: 29px; margin: 0 6px 0 4px; background: #fff; border: 1px solid #c4c6c8; }
.fbox input { flex: 1; min-width: 0; outline: 0; padding: 0 4px; }
.fbox button { width: 18px; }
.fbox svg { width: 8px; height: 8px; }
.plus { margin-left: 12px; }
.plus svg { width: 12px; height: 12px; }
.tree { flex: 1; margin-top: 4px; background: #fdfdfd; border-top: 1px solid #c9cbcd; list-style: none; }
.tree li { display: flex; align-items: center; gap: 5px; height: 24px; padding-left: 23px; color: #444; }
.tree .root { padding-left: 3px; }
.tree .node { padding-left: 8px; }
.twist { width: 10px; height: 10px; background: #888; clip-path: polygon(20% 0, 90% 50%, 20% 100%); }

.view { position: relative; flex: 1; min-width: 0; background: #e8eaee; }
.model { width: 100%; height: 100%; }
.vtools { position: absolute; top: 5px; left: 50%; transform: translateX(-50%); display: grid; grid-template-columns: repeat(11, 1fr); width: 297px; height: 33px; padding: 0 2px; align-items: center; justify-items: center; background: #f8f9fa; border: 1px solid #a9acaf; }
.vtools button { width: 24px; height: 24px; position: relative; border: 1px solid transparent; }
.vtools .pressed, .sb.pressed { background: #dadcde; border: 1px solid #a9acaf; }
.vtools .dd::after { content: ""; position: absolute; right: 0; bottom: 1px; border: 2px solid #444; border-top-color: transparent; border-left-color: transparent; }

/* status bar */
.status { display: flex; height: 37px; align-items: center; background: #eff0f1; padding: 4px 19px 0 6px; flex: none; }
.sb { width: 22px; height: 22px; margin-right: 4px; }
.sb svg { height: 16px; }
.sb.pressed svg { width: 14px; height: 18px; }
.status > .vbar { margin-left: 5px; }
.spring { flex: 1; }
.cell { height: 31px; margin-top: -6px; border-left: 1px solid #aaa; display: flex; align-items: center; }
.c1 { width: 45px; padding-left: 2px; }
.c2 { width: 41px; }
.c3 { width: 48px; border-right: 1px solid #aaa; padding-left: 2px; }
.find, .drop { height: 24px; background: #fff; border: 1px solid #c5c7c9; }
.find { width: 28px; }
.drop { width: 14px; flex: 1; margin: 0 2px 0 -1px; }
.combo { display: flex; align-items: center; width: 177px; height: 25px; margin: -4px 0 0 97px; background: #f6f7f7; border: 1px solid #b5b7b9; padding-right: 4px; }
.combo select { flex: 1; appearance: none; padding-left: 8px; outline: 0; color: #222; }

.taskbar { position: relative; display: flex; height: 7px; flex: none; overflow: hidden; background: linear-gradient(90deg, #2a3350 0%, #3c4468 22%, #20264a 50%, #2c3160 77%, #7e88c4 80%, #6f7ab8 84%, #262a4e 90%, #191c38 100%); border-top: 1px solid #14182c; padding-left: 10px; }
.orb { width: 34px; height: 20px; border-radius: 50%; background: #86aecb; margin-right: 16px; }
.task { width: 50px; height: 20px; border: 1px solid #d8dcec; border-radius: 3px; margin-right: 12px; background: #8f939f; }
.t2 { width: 54px; margin-right: 8px; background: radial-gradient(circle at 60% 50%, #59b95c 0 10px, #a4a9c4 14px); }
.t3 { width: 58px; margin-right: 4px; background: linear-gradient(90deg, #c9ccdc 22%, #fff 22% 77%, #c9ccdc 77%); }
.t4 { width: 58px; margin-right: 4px; background: radial-gradient(circle at 50% 60%, #e82b2b 0 12px, #9aa0cc 15px); }
.t5 { width: 54px; margin-right: 8px; background: linear-gradient(90deg, #a9abd0 18%, #f4b8bf 18% 75%, #8f93c8 75%); }
.t6 { width: 58px; background: linear-gradient(90deg, #c4c7d4, #4a5070); }
.clock { margin-left: auto; margin-right: 37px; color: #fff; }

/* forum mark laid over the corner of the window */
.watermark { position: absolute; right: 5px; bottom: 6px; width: 206px; height: 61px; display: flex; padding: 2px 0 0 1px; background: rgba(248, 249, 250, .3); pointer-events: none; }
.watermark svg { width: 58px; height: 58px; }
.watermark div { display: flex; flex-direction: column; margin-left: -1px; }
.watermark strong { font: 900 29px/32px "Noto Sans CJK SC", sans-serif; color: #8fd3a9; padding-left: 12px; }
.watermark span { font-size: 15px; line-height: 20px; color: #bcdcd0; }
```
